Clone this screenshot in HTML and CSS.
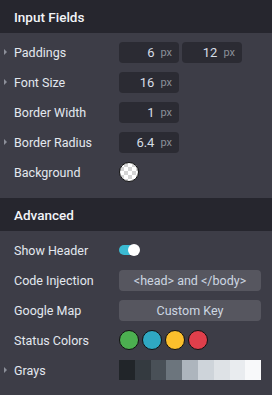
FILE: index.html
```html
<!DOCTYPE html>
<html lang="en">
  <head>
    <meta charset="UTF-8" />
    <title>Settings</title>
    <link rel="stylesheet" href="styles.css">
  </head>
  <body>
    <div class="panel">
      <div class="section-title">Input Fields</div>
      <div class="section">
        <div class="row">
          <span class="caret"></span>
          <span class="label">Paddings</span>
          <div class="controls">
            <div class="num"><span class="val">6</span><span class="unit">px</span></div>
            <div class="num"><span class="val">12</span><span class="unit">px</span></div>
          </div>
        </div>
        <div class="row">
          <span class="caret"></span>
          <span class="label">Font Size</span>
          <div class="controls">
            <div class="num"><span class="val">16</span><span class="unit">px</span></div>
          </div>
        </div>
        <div class="row">
          <span class="caret-space"></span>
          <span class="label">Border Width</span>
          <div class="controls">
            <div class="num"><span class="val">1</span><span class="unit">px</span></div>
          </div>
        </div>
        <div class="row">
          <span class="caret"></span>
          <span class="label">Border Radius</span>
          <div class="controls">
            <div class="num"><span class="val">6.4</span><span class="unit">px</span></div>
          </div>
        </div>
        <div class="row">
          <span class="caret-space"></span>
          <span class="label">Background</span>
          <div class="controls">
            <span class="swatch transparent"></span>
          </div>
        </div>
      </div>

      <div class="section-title">Advanced</div>
      <div class="section">
        <div class="row">
          <span class="caret-space"></span>
          <span class="label">Show Header</span>
          <div class="controls">
            <span class="toggle"><span class="knob"></span></span>
          </div>
        </div>
        <div class="row">
          <span class="caret-space"></span>
          <span class="label">Code Injection</span>
          <div class="controls">
            <button class="btn">&lt;head&gt; and &lt;/body&gt;</button>
          </div>
        </div>
        <div class="row">
          <span class="caret-space"></span>
          <span class="label">Google Map</span>
          <div class="controls">
            <button class="btn">Custom Key</button>
          </div>
        </div>
        <div class="row">
          <span class="caret-space"></span>
          <span class="label">Status Colors</span>
          <div class="controls dots">
            <span class="swatch green"></span>
            <span class="swatch teal"></span>
            <span class="swatch yellow"></span>
            <span class="swatch red"></span>
          </div>
        </div>
        <div class="row">
          <span class="caret"></span>
          <span class="label">Grays</span>
          <div class="controls grays">
            <span class="gray g1"></span>
            <span class="gray g2"></span>
            <span class="gray g3"></span>
            <span class="gray g4"></span>
            <span class="gray g5"></span>
            <span class="gray g6"></span>
            <span class="gray g7"></span>
            <span class="gray g8"></span>
            <span class="gray g9"></span>
          </div>
        </div>
      </div>
    </div>
  </body>
</html>
```

FILE: styles.css
```css
body {
  margin: 0;
  background: #3d3d47;
  font-family: Roboto, "Noto Sans", sans-serif;
  color: #e3e8ef;
}

.panel {
  width: 272px;
}

.section-title {
  height: 33px;
  display: flex;
  align-items: center;
  padding-left: 14px;
  background: #26262e;
  font-size: 13.5px;
  font-weight: 500;
  color: #f2f4f8;
}

.section {
  padding: 4px 0 11px;
}

.section:last-child {
  padding-bottom: 9px;
}

.row {
  height: 30px;
  display: flex;
  align-items: center;
}

.caret,
.caret-space {
  width: 14px;
  display: flex;
  justify-content: center;
}

.caret::before {
  content: "";
  margin-left: -4px;
  border-left: 3px solid #8c8f99;
  border-top: 3px solid transparent;
  border-bottom: 3px solid transparent;
}

.label {
  width: 105px;
  font-size: 12.5px;
}

.controls {
  display: flex;
  align-items: center;
  gap: 3px;
}

.num {
  width: 60px;
  height: 21px;
  box-sizing: border-box;
  padding-right: 7px;
  border-radius: 4px;
  background: #2b2b33;
  display: flex;
  align-items: center;
  justify-content: flex-end;
  gap: 6px;
}

.val {
  font-size: 13px;
  color: #d6dde6;
}

.unit {
  font-size: 11px;
  color: #8c9099;
}

.swatch {
  width: 20px;
  height: 20px;
  box-sizing: border-box;
  border-radius: 50%;
  border: 1px solid #111;
}

.transparent {
  background-color: #fff;
  background-image:
    linear-gradient(45deg, #d4d4d4 25%, transparent 25%, transparent 75%, #d4d4d4 75%),
    linear-gradient(45deg, #d4d4d4 25%, transparent 25%, transparent 75%, #d4d4d4 75%);
  background-size: 8px 8px;
  background-position: 0 0, 4px 4px;
}

.toggle {
  width: 20px;
  height: 10px;
  border-radius: 5px;
  background: #3bbbd3;
  position: relative;
}

.knob {
  position: absolute;
  right: -1px;
  top: -1px;
  width: 12px;
  height: 12px;
  border-radius: 50%;
  background: #fff;
}

.btn {
  width: 142px;
  height: 21px;
  border: none;
  border-radius: 4px;
  background: #56565f;
  color: #cdd6e2;
  font-family: Roboto, "Noto Sans", sans-serif;
  font-size: 12.5px;
  padding: 0;
}

.dots {
  gap: 3px;
}

.green { background: #4caf50; }
.teal { background: #2fa8c2; }
.yellow { background: #fbbf2c; }
.red { background: #df3f4b; }

.grays {
  gap: 0;
}

.gray {
  width: 15.8px;
  height: 20px;
}

.g1 { background: #212529; }
.g2 { background: #343a40; }
.g3 { background: #495057; }
.g4 { background: #6c757d; }
.g5 { background: #adb5bd; }
.g6 { background: #ced4da; }
.g7 { background: #dee2e6; }
.g8 { background: #e9ecef; }
.g9 { background: #f8f9fa; }
```
